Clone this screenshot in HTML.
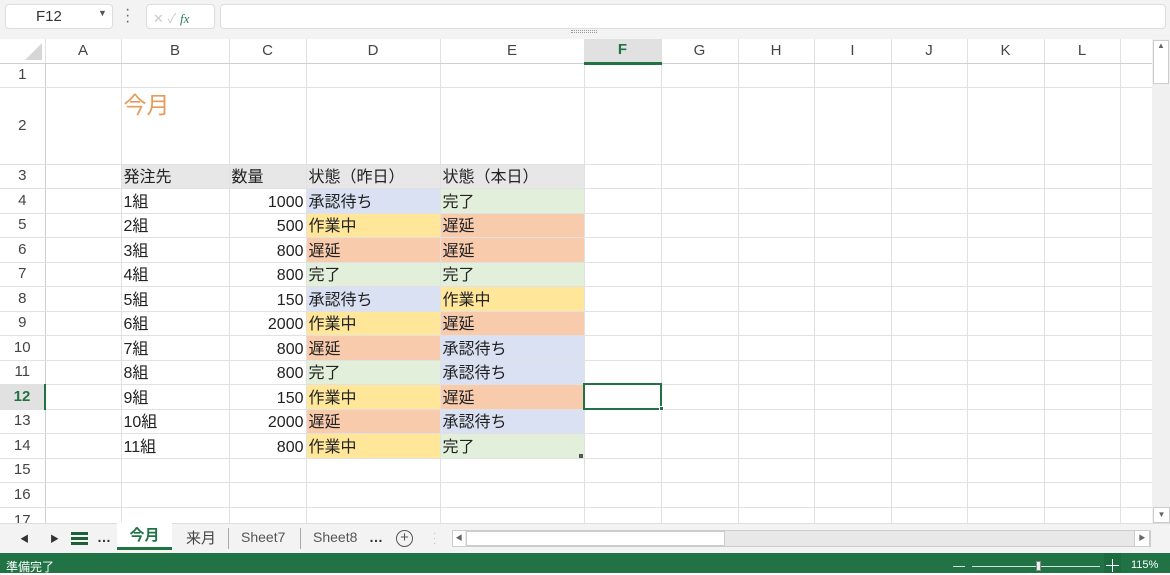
<!DOCTYPE html>
<html><head><meta charset="utf-8"><style>
*{box-sizing:border-box;margin:0;padding:0}
body{width:1170px;height:573px;overflow:hidden;background:#fff;font-family:"Liberation Sans","Noto Sans CJK JP",sans-serif;position:relative}
.a{position:absolute}
table{position:absolute;left:0;top:39px;border-collapse:collapse;table-layout:fixed;width:1152px}
td{border-right:1px solid #e1e1e1;border-bottom:1px solid #e1e1e1;font-size:16px;color:#222;padding:0 2px;white-space:nowrap;overflow:hidden;line-height:20px;vertical-align:bottom}
td.h{background:#fff;color:#444;text-align:center;border-right:1px solid #cfcfcf;vertical-align:middle;font-size:15px}
tr.ch td{background:#fff;text-align:center;color:#444;vertical-align:middle;font-size:15px;border-bottom:1px solid #cfcfcf}
.r{text-align:right}
.bl{background:#d9e1f2}.gr{background:#e2efda}.ye{background:#ffe699}.or{background:#f8cbad}.gy{background:#e7e7e7}
</style></head><body>
<div class="a" style="left:0;top:0;width:1170px;height:39px;background:#f3f3f3"></div>
<div class="a" style="left:5px;top:4px;width:108px;height:25px;background:#fff;border:1px solid #ddd;border-radius:4px;font-size:15px;color:#333;padding:3px 0 0 30px">F12<span style="position:absolute;left:92px;top:3px;font-size:9px;color:#555">▼</span></div>
<div class="a" style="left:125px;top:7px;font-size:16px;color:#666;line-height:6px">·<br>·<br>·</div>
<div class="a" style="left:146px;top:4px;width:69px;height:25px;background:#fff;border:1px solid #ddd;border-radius:4px;font-size:13px;color:#ccc;padding:3px 0 0 6px">✕ ✓ <i style="color:#2b7a5a;font-family:'Liberation Serif',serif">fx</i></div>
<div class="a" style="left:220px;top:4px;width:946px;height:25px;background:#fff;border:1px solid #ddd;border-radius:4px"></div>
<div class="a" style="left:571px;top:30px;width:26px;height:3px;border-top:1px dotted #999;border-bottom:1px dotted #999"></div>
<table>
<colgroup><col style="width:45px"><col style="width:76px"><col style="width:108px"><col style="width:77px"><col style="width:134px"><col style="width:144px"><col style="width:77px"><col style="width:77px"><col style="width:76px"><col style="width:77px"><col style="width:76px"><col style="width:77px"><col style="width:76px"><col style="width:32px"></colgroup>
<tr class="ch" style="height:24px"><td style="position:relative"><div style="position:absolute;right:3px;bottom:3px;width:0;height:0;border-left:17px solid transparent;border-bottom:17px solid #d6d6d6"></div></td><td>A</td><td>B</td><td>C</td><td>D</td><td>E</td><td style="background:#e1e1e1;color:#217346;font-weight:bold;border-bottom:3px solid #217346">F</td><td>G</td><td>H</td><td>I</td><td>J</td><td>K</td><td>L</td><td></td></tr>
<tr style="height:24px"><td class="h">1</td><td></td><td></td><td></td><td></td><td></td><td></td><td></td><td></td><td></td><td></td><td></td><td></td><td></td></tr>
<tr style="height:77px"><td class="h" style="vertical-align:middle">2</td><td></td><td style="vertical-align:top;padding-top:2px;color:#e59b5a;font-size:23px;line-height:30px">今月</td><td></td><td></td><td></td><td></td><td></td><td></td><td></td><td></td><td></td><td></td><td></td></tr>
<tr style="height:24px"><td class="h">3</td><td></td><td class="gy">発注先</td><td class="gy">数量</td><td class="gy">状態（昨日）</td><td class="gy">状態（本日）</td><td></td><td></td><td></td><td></td><td></td><td></td><td></td><td></td></tr>
<tr style="height:25px"><td class="h">4</td><td></td><td>1組</td><td class="r">1000</td><td class="bl">承認待ち</td><td class="gr">完了</td><td></td><td></td><td></td><td></td><td></td><td></td><td></td><td></td></tr>
<tr style="height:24px"><td class="h">5</td><td></td><td>2組</td><td class="r">500</td><td class="ye">作業中</td><td class="or">遅延</td><td></td><td></td><td></td><td></td><td></td><td></td><td></td><td></td></tr>
<tr style="height:25px"><td class="h">6</td><td></td><td>3組</td><td class="r">800</td><td class="or">遅延</td><td class="or">遅延</td><td></td><td></td><td></td><td></td><td></td><td></td><td></td><td></td></tr>
<tr style="height:24px"><td class="h">7</td><td></td><td>4組</td><td class="r">800</td><td class="gr">完了</td><td class="gr">完了</td><td></td><td></td><td></td><td></td><td></td><td></td><td></td><td></td></tr>
<tr style="height:25px"><td class="h">8</td><td></td><td>5組</td><td class="r">150</td><td class="bl">承認待ち</td><td class="ye">作業中</td><td></td><td></td><td></td><td></td><td></td><td></td><td></td><td></td></tr>
<tr style="height:24px"><td class="h">9</td><td></td><td>6組</td><td class="r">2000</td><td class="ye">作業中</td><td class="or">遅延</td><td></td><td></td><td></td><td></td><td></td><td></td><td></td><td></td></tr>
<tr style="height:25px"><td class="h">10</td><td></td><td>7組</td><td class="r">800</td><td class="or">遅延</td><td class="bl">承認待ち</td><td></td><td></td><td></td><td></td><td></td><td></td><td></td><td></td></tr>
<tr style="height:24px"><td class="h">11</td><td></td><td>8組</td><td class="r">800</td><td class="gr">完了</td><td class="bl">承認待ち</td><td></td><td></td><td></td><td></td><td></td><td></td><td></td><td></td></tr>
<tr style="height:25px"><td class="h" style="color:#217346;font-weight:bold;background:#e1e1e1;border-right:2px solid #217346">12</td><td></td><td>9組</td><td class="r">150</td><td class="ye">作業中</td><td class="or">遅延</td><td></td><td></td><td></td><td></td><td></td><td></td><td></td><td></td></tr>
<tr style="height:24px"><td class="h">13</td><td></td><td>10組</td><td class="r">2000</td><td class="or">遅延</td><td class="bl">承認待ち</td><td></td><td></td><td></td><td></td><td></td><td></td><td></td><td></td></tr>
<tr style="height:25px"><td class="h">14</td><td></td><td>11組</td><td class="r">800</td><td class="ye">作業中</td><td class="gr">完了</td><td></td><td></td><td></td><td></td><td></td><td></td><td></td><td></td></tr>
<tr style="height:24px"><td class="h">15</td><td></td><td></td><td></td><td></td><td></td><td></td><td></td><td></td><td></td><td></td><td></td><td></td><td></td></tr>
<tr style="height:25px"><td class="h">16</td><td></td><td></td><td></td><td></td><td></td><td></td><td></td><td></td><td></td><td></td><td></td><td></td><td></td></tr>
<tr style="height:24px"><td class="h" style="vertical-align:top;padding-top:3px">17</td><td></td><td></td><td></td><td></td><td></td><td></td><td></td><td></td><td></td><td></td><td></td><td></td><td></td></tr>
</table>
<div class="a" style="left:583px;top:383px;width:79px;height:27px;border:2px solid #217346"></div>
<div class="a" style="left:659px;top:406px;width:5px;height:5px;background:#217346;border:1px solid #fff"></div>
<div class="a" style="left:579px;top:454px;width:4px;height:4px;background:#555"></div>
<!-- vertical scrollbar -->
<div class="a" style="left:1152px;top:39px;width:18px;height:484px;background:#f0f0f0"></div>
<div class="a" style="left:1153px;top:40px;width:16px;height:44px;background:#fff;border:1px solid #ccc;font-size:8px;color:#666;text-align:center">▲</div>
<div class="a" style="left:1153px;top:507px;width:17px;height:16px;background:#fff;border:1px solid #ccc;font-size:8px;color:#666;text-align:center;line-height:14px">▼</div>
<!-- tab bar -->
<div class="a" style="left:0;top:523px;width:1170px;height:30px;background:#f3f3f3;border-top:1px solid #ddd"></div>
<div class="a" style="left:20px;top:532px;font-size:9px;color:#333">◀</div>
<div class="a" style="left:50px;top:532px;font-size:9px;color:#333">▶</div>
<div class="a" style="left:71px;top:532px;width:17px;height:13px;border-top:3px solid #1e5e3a;border-bottom:3px solid #1e5e3a"><div style="margin-top:2px;height:3px;background:#1e5e3a"></div></div>
<div class="a" style="left:97px;top:529px;font-size:14px;color:#333;font-weight:bold">…</div>
<div class="a" style="left:117px;top:522px;width:55px;height:28px;background:#fff;border-bottom:3px solid #217346;font-size:15px;font-weight:bold;color:#217346;text-align:center;line-height:27px">今月</div>
<div class="a" style="left:186px;top:527px;font-size:15px;color:#444">来月</div>
<div class="a" style="left:228px;top:528px;width:1px;height:21px;background:#aaa"></div>
<div class="a" style="left:241px;top:529px;font-size:14px;color:#555">Sheet7</div>
<div class="a" style="left:300px;top:528px;width:1px;height:21px;background:#aaa"></div>
<div class="a" style="left:313px;top:529px;font-size:14px;color:#555">Sheet8</div>
<div class="a" style="left:369px;top:529px;font-size:14px;color:#333;font-weight:bold">…</div>
<div class="a" style="left:396px;top:530px;width:17px;height:17px;border:1.5px solid #555;border-radius:50%;text-align:center;font-size:15px;line-height:14px;color:#555">+</div>
<div class="a" style="left:433px;top:531px;font-size:10px;color:#bbb;line-height:5px">·<br>·<br>·</div>
<div class="a" style="left:452px;top:530px;width:699px;height:17px;background:#e8e8e8;border:1px solid #ccc"></div>
<div class="a" style="left:453px;top:531px;width:12px;height:15px;background:#fff;font-size:7px;color:#666;line-height:15px;text-align:center">◀</div>
<div class="a" style="left:466px;top:531px;width:259px;height:15px;background:#fff;border:1px solid #ccc"></div>
<div class="a" style="left:1134px;top:530px;width:16px;height:17px;background:#fff;border:1px solid #ccc;font-size:7px;color:#666;line-height:15px;text-align:center">▶</div>
<!-- status -->
<div class="a" style="left:0;top:553px;width:1170px;height:20px;background:#217346"></div>
<div class="a" style="left:6px;top:558px;font-size:12px;color:#fff">準備完了</div>
<div class="a" style="left:953px;top:566px;width:12px;height:1px;background:#cfe3d6"></div>
<div class="a" style="left:972px;top:566px;width:128px;height:1px;background:#cfe3d6"></div>
<div class="a" style="left:1036px;top:561px;width:5px;height:10px;background:#eee;border:1px solid #888"></div>
<div class="a" style="left:1104px;top:553px;width:17px;height:20px;background:#1c6a3f"></div>
<div class="a" style="left:1106px;top:565px;width:13px;height:1px;background:#fff"></div>
<div class="a" style="left:1112px;top:559px;width:1px;height:13px;background:#fff"></div>
<div class="a" style="left:1131px;top:559px;font-size:11px;color:#fff">115%</div>
</body></html>
